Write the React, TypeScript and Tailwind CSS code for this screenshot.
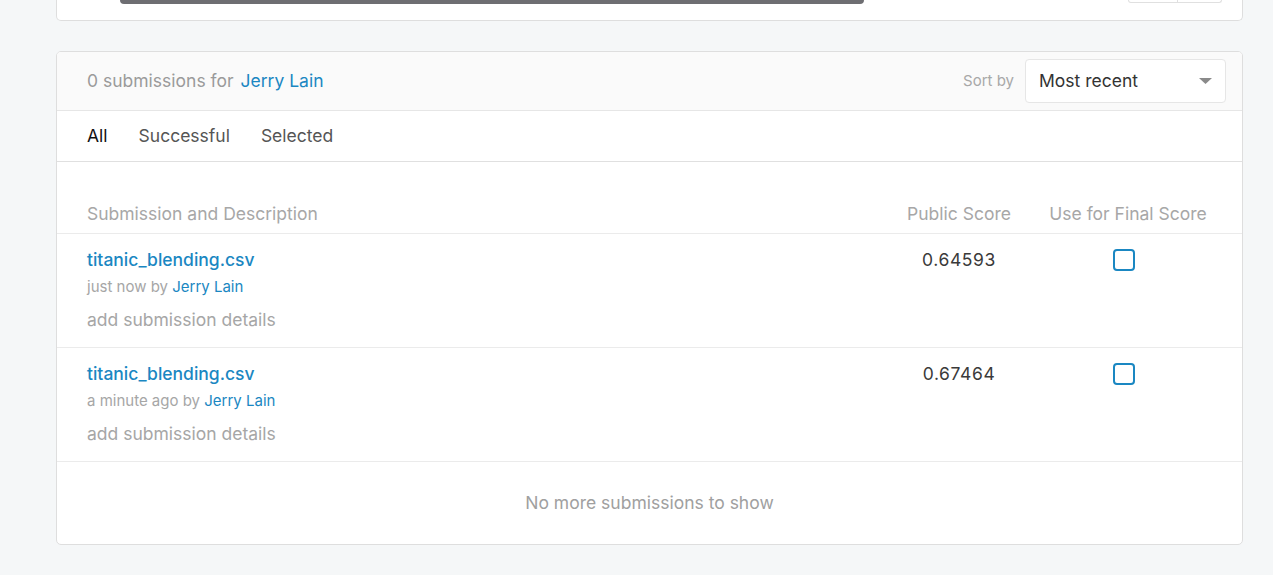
import React from "react";

const rows = [
  { file: "titanic_blending.csv", when: "just now", score: "0.64593" },
  { file: "titanic_blending.csv", when: "a minute ago", score: "0.67464" },
];

export default function App() {
  return (
    <div
      className="min-h-[575px] w-full bg-[#f5f7f8] pb-[30px] pl-[56px] pr-[30px]"
      style={{ fontFamily: "Inter, 'Noto Sans', sans-serif" }}
    >
      {/* bottom of the previous card */}
      <div className="relative h-[21px] rounded-b-[5px] border-x border-b border-[#dedede] bg-white">
        <div className="ml-[63px] h-[4px] w-[744px] rounded-b-[4px] bg-[#6e6e72]" />
        <div className="absolute right-[20px] top-0 flex h-[3px] w-[94px] rounded-b-[4px] border-x border-b border-[#e0e0e0]">
          <div className="w-[49px] border-r border-[#e0e0e0]" />
        </div>
      </div>

      <div className="mt-[30px] overflow-hidden rounded-[5px] border border-[#dedede] bg-white">
        {/* header */}
        <div className="flex h-[59px] items-center justify-between border-b border-[#e6e6e6] bg-[#fafafa] pl-[30px] pr-[16px]">
          <div className="text-[17.5px] text-[#9a9a9a]">
            0 submissions for <span className="ml-[2px] text-[#1a87c2]">Jerry Lain</span>
          </div>
          <div className="flex items-center">
            <span className="mr-[11px] text-[15px] text-[#a8a8a8]">Sort by</span>
            <div className="flex h-[44px] w-[201px] items-center justify-between rounded-[4px] border border-[#e6e6e6] bg-white pl-[13px] pr-[13px]">
              <span className="text-[17.5px] text-[#333333]">Most recent</span>
              <svg width="13" height="7" viewBox="0 0 13 7">
                <path d="M0 0 L13 0 L6.5 6 Z" fill="#8a8a8a" />
              </svg>
            </div>
          </div>
        </div>

        {/* tabs */}
        <div className="flex h-[51px] items-center gap-[31px] border-b border-[#e0e0e0] pl-[30px] text-[17.5px]">
          <span className="text-[#111111]">All</span>
          <span className="text-[#555555]">Successful</span>
          <span className="text-[#555555]">Selected</span>
        </div>

        {/* table header */}
        <div className="flex items-end whitespace-nowrap border-b border-[#ebebeb] pb-[7px] pl-[30px] pr-[36px] pt-[40px] text-[17.5px] leading-[24px] text-[#a7a7a7]">
          <div className="flex-1">Submission and Description</div>
          <div className="flex w-[104px] justify-center">Public Score</div>
          <div className="ml-[39px] flex w-[156px] justify-center">Use for Final Score</div>
        </div>

        {rows.map((r, i) => (
          <div
            key={i}
            className="flex items-start border-b border-[#ebebeb] pb-[15px] pl-[30px] pr-[36px] pt-[14px]"
          >
            <div className="flex-1">
              <div className="text-[17.5px] font-medium leading-[24px] text-[#1a87c2]">{r.file}</div>
              <div className="mt-[5px] text-[15px] leading-[20px] text-[#a6a6a6]">
                {r.when} by <span className="text-[#1a87c2]">Jerry Lain</span>
              </div>
              <div className="mt-[11px] text-[17.5px] leading-[24px] text-[#a6a6a6]">add submission details</div>
            </div>
            <div className="w-[104px] text-center text-[17.5px] leading-[24px] tracking-[0.6px] text-[#3a3a3a]">{r.score}</div>
            <div className="ml-[39px] flex w-[156px] justify-center pt-[1px]">
              <div className="mr-[8px] h-[22px] w-[22px] rounded-[4px] border-2 border-[#1a87c2] bg-white" />
            </div>
          </div>
        ))}

        <div className="flex h-[82px] items-center justify-center text-[17.5px] text-[#a0a0a0]">
          No more submissions to show
        </div>
      </div>
    </div>
  );
}
